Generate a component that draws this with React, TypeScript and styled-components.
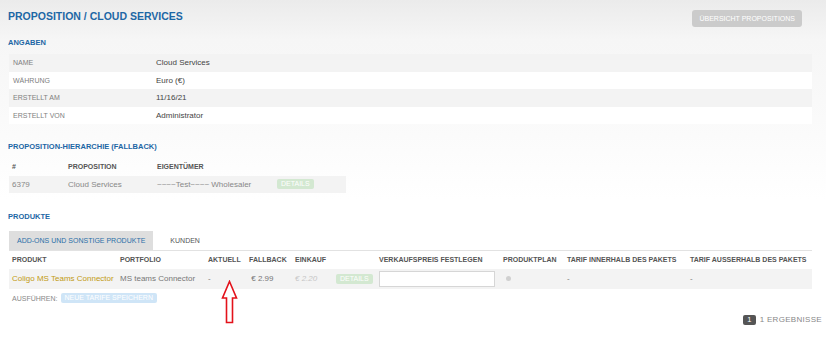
import styled, { createGlobalStyle } from 'styled-components';

const GlobalStyle = createGlobalStyle`
  html, body {
    margin: 0;
    padding: 0;
    background: #fff;
    font-family: "Liberation Sans", Arial, sans-serif;
  }
`;

const infoRows = [
  { label: 'NAME', value: 'Cloud Services' },
  { label: 'WÄHRUNG', value: 'Euro (€)' },
  { label: 'ERSTELLT AM', value: '11/16/21' },
  { label: 'ERSTELLT VON', value: 'Administrator' }
];

const hierCols = [
  { name: '#', width: 56 },
  { name: 'PROPOSITION', width: 89 },
  { name: 'EIGENTÜMER', width: 120 },
  { name: '', width: 72 }
];

const productCols = [
  { name: 'PRODUKT', width: 108 },
  { name: 'PORTFOLIO', width: 88 },
  { name: 'AKTUELL', width: 41 },
  { name: 'FALLBACK', width: 46 },
  { name: 'EINKAUF', width: 41 },
  { name: '', width: 43 },
  { name: 'VERKAUFSPREIS FESTLEGEN', width: 124 },
  { name: 'PRODUKTPLAN', width: 64 },
  { name: 'TARIF INNERHALB DES PAKETS', width: 123 },
  { name: 'TARIF AUSSERHALB DES PAKETS', width: 125 }
];

const Page = styled.div`
  position: relative;
  width: 826px;
  height: 340px;
  overflow: hidden;
  background: linear-gradient(#ebebeb 0px, #f6f6f6 40px, #fafafa 120px, #fff 200px);
  padding: 0 14px 0 9px;
  box-sizing: border-box;
`;

const Header = styled.div`
  display: flex;
  justify-content: space-between;
  align-items: center;
  height: 32px;
  margin-left: -1px;
  padding-right: 10px;
`;

const Title = styled.h1`
  margin: 0;
  color: #1d67a5;
  font-size: 10.5px;
  font-weight: 700;
`;

const GreyButton = styled.button`
  border: 0;
  border-radius: 3px;
  background: #cbcbcb;
  color: #fff;
  font-family: inherit;
  font-size: 7px;
  height: 17px;
  padding: 0 7px;
  margin-top: 4px;
`;

const SectionTitle = styled.h2`
  margin: 0 0 0 -1px;
  height: 22px;
  line-height: 22px;
  color: #1d67a5;
  font-size: 7.5px;
  font-weight: 700;
`;

const InfoTable = styled.table`
  width: 100%;
  border-collapse: collapse;
  margin-bottom: 12px;
`;

const Row = styled.tr<{ $striped?: boolean; $h?: number }>`
  background: ${(p) => (p.$striped ? '#f3f3f3' : '#fff')};
  & > td {
    height: ${(p) => p.$h ?? 17.5}px;
  }
`;

const LabelCell = styled.td`
  width: 143px;
  padding: 0 0 0 4px;
  color: #808080;
  font-size: 7px;
`;

const ValueCell = styled.td`
  padding: 0;
  color: #444;
  font-size: 8px;
`;

const HierTable = styled.table`
  width: 337px;
  border-collapse: collapse;
  table-layout: fixed;
  margin-bottom: 13px;
`;

const HeadCell = styled.th`
  height: 17.5px;
  padding: 0 0 0 3px;
  text-align: left;
  color: #555;
  font-size: 7px;
  font-weight: 700;
  white-space: nowrap;
`;

const Cell = styled.td<{ $tone?: 'gold' | 'muted' | 'light' }>`
  padding: 0 0 0 3px;
  font-size: 8px;
  white-space: nowrap;
  color: ${(p) =>
    p.$tone === 'gold' ? '#c29a12' : p.$tone === 'muted' ? '#c6c6c6' : p.$tone === 'light' ? '#888' : '#777'};
  font-style: ${(p) => (p.$tone === 'muted' ? 'italic' : 'normal')};
`;

const Badge = styled.span<{ $kind: 'green' | 'blue' }>`
  display: inline-block;
  padding: 1px 4px;
  border-radius: 2px;
  font-size: 7px;
  line-height: 8px;
  color: #fff;
  background: ${(p) => (p.$kind === 'green' ? '#d3e8d1' : '#cfe5f7')};
`;

const Tabs = styled.div`
  display: flex;
  align-items: stretch;
  height: 19px;
  margin-top: 3px;
  border-bottom: 1px solid #e2e2e2;
`;

const Tab = styled.div<{ $active?: boolean }>`
  display: flex;
  align-items: center;
  padding: 0 ${(p) => (p.$active ? '8px' : '17px')};
  background: ${(p) => (p.$active ? '#dedede' : 'transparent')};
  color: ${(p) => (p.$active ? '#2a6fa8' : '#555')};
  font-size: 7px;
`;

const ProductTable = styled.table`
  border-collapse: collapse;
  table-layout: fixed;
  width: 803px;
`;

const PriceInput = styled.input`
  box-sizing: border-box;
  width: 116px;
  height: 16px;
  border: 1px solid #d6d6d6;
  background: #fff;
  vertical-align: middle;
`;

const Dot = styled.span`
  display: inline-block;
  width: 5px;
  height: 5px;
  border-radius: 50%;
  background: #d0d0d0;
  margin-left: 3px;
`;

const Actions = styled.div`
  display: flex;
  align-items: center;
  gap: 3px;
  height: 19px;
  padding-left: 3px;
  color: #888;
  font-size: 7px;
`;

const Pager = styled.div`
  display: flex;
  justify-content: flex-end;
  align-items: center;
  gap: 4px;
  margin-top: 7px;
  margin-right: -10px;
  color: #888;
  font-size: 8px;
  letter-spacing: 0.3px;
`;

const PageNum = styled.span`
  display: inline-block;
  background: #555;
  color: #fff;
  border-radius: 2px;
  padding: 1px 4px;
  font-size: 7.5px;
  line-height: 8px;
`;

const Arrow = styled.svg`
  position: absolute;
  left: 221px;
  top: 280px;
`;

export default function App() {
  return (
    <>
      <GlobalStyle />
      <Page>
        <Header>
          <Title>PROPOSITION / CLOUD SERVICES</Title>
          <GreyButton>ÜBERSICHT PROPOSITIONS</GreyButton>
        </Header>

        <SectionTitle>ANGABEN</SectionTitle>
        <InfoTable>
          <tbody>
            {infoRows.map((r, i) => (
              <Row key={r.label} $striped={i % 2 === 0}>
                <LabelCell>{r.label}</LabelCell>
                <ValueCell>{r.value}</ValueCell>
              </Row>
            ))}
          </tbody>
        </InfoTable>

        <SectionTitle>PROPOSITION-HIERARCHIE (FALLBACK)</SectionTitle>
        <HierTable>
          <colgroup>
            {hierCols.map((c, i) => (
              <col key={i} style={{ width: c.width }} />
            ))}
          </colgroup>
          <thead>
            <tr>
              {hierCols.map((c, i) => (
                <HeadCell key={i}>{c.name}</HeadCell>
              ))}
            </tr>
          </thead>
          <tbody>
            <Row $striped>
              <Cell $tone='light'>6379</Cell>
              <Cell $tone='light'>Cloud Services</Cell>
              <Cell $tone='light'>~~~~Test~~~~ Wholesaler</Cell>
              <Cell>
                <Badge $kind='green'>DETAILS</Badge>
              </Cell>
            </Row>
          </tbody>
        </HierTable>

        <SectionTitle>PRODUKTE</SectionTitle>
        <Tabs>
          <Tab $active>ADD-ONS UND SONSTIGE PRODUKTE</Tab>
          <Tab>KUNDEN</Tab>
        </Tabs>
        <ProductTable>
          <colgroup>
            {productCols.map((c, i) => (
              <col key={i} style={{ width: c.width }} />
            ))}
          </colgroup>
          <thead>
            <tr>
              {productCols.map((c, i) => (
                <HeadCell key={i}>{c.name}</HeadCell>
              ))}
            </tr>
          </thead>
          <tbody>
            <Row $striped $h={20}>
              <Cell $tone='gold'>Coligo MS Teams Connector</Cell>
              <Cell>MS teams Connector</Cell>
              <Cell>-</Cell>
              <Cell>&nbsp;€ 2.99</Cell>
              <Cell $tone='muted'>€ 2.20</Cell>
              <Cell>
                <Badge $kind='green'>DETAILS</Badge>
              </Cell>
              <Cell>
                <PriceInput />
              </Cell>
              <Cell>
                <Dot />
              </Cell>
              <Cell>-</Cell>
              <Cell>-</Cell>
            </Row>
          </tbody>
        </ProductTable>
        <Actions>
          AUSFÜHREN: <Badge $kind='blue'>NEUE TARIFE SPEICHERN</Badge>
        </Actions>
        <Pager>
          <PageNum>1</PageNum>1 ERGEBNISSE
        </Pager>

        <Arrow width='17' height='44' viewBox='0 0 17 44'>
          <polygon
            points='8.5,1.5 15.5,18 11.5,18 11.5,42.5 5.5,42.5 5.5,18 1.5,18'
            fill='#fff'
            stroke='#e3121b'
            strokeWidth='1.6'
            strokeLinejoin='miter'
          />
        </Arrow>
      </Page>
    </>
  );
}
